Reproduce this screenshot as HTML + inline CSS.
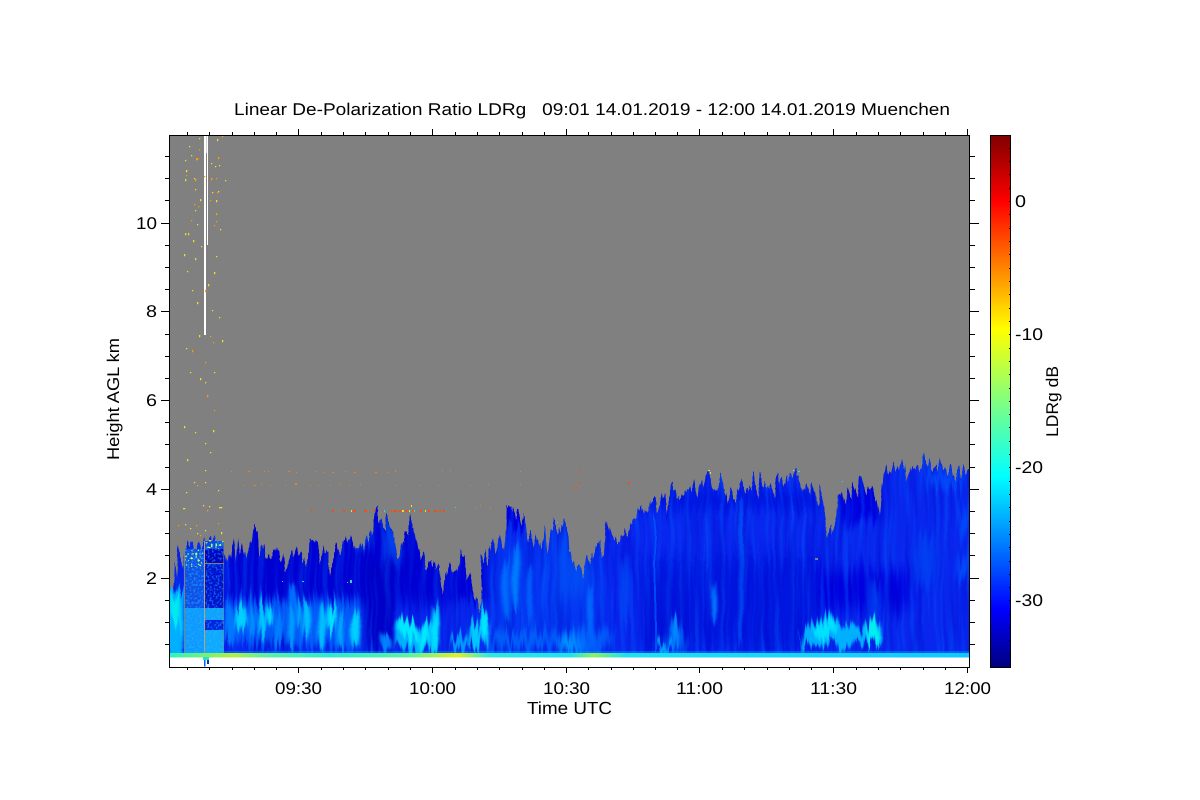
<!DOCTYPE html>
<html><head><meta charset="utf-8"><title>LDRg</title>
<style>html,body{margin:0;padding:0;background:#fff}svg{display:block}text{font-family:"Liberation Sans",sans-serif;fill:#000}</style></head>
<body>
<svg width="1200" height="800" viewBox="0 0 1200 800" xmlns="http://www.w3.org/2000/svg" shape-rendering="crispEdges">
<defs>
<linearGradient id="jet" x1="0" y1="1" x2="0" y2="0">
<stop offset="0" stop-color="#000080"/><stop offset=".11" stop-color="#0000ff"/><stop offset=".36" stop-color="#00ffff"/><stop offset=".5" stop-color="#80ff80"/><stop offset=".635" stop-color="#ffff00"/><stop offset=".875" stop-color="#ff0000"/><stop offset="1" stop-color="#800000"/>
</linearGradient>
<linearGradient id="band" x1="0" y1="0" x2="1" y2="0">
<stop offset="0" stop-color="#30f0c0"/><stop offset=".08" stop-color="#b0f040"/><stop offset=".12" stop-color="#60f0a0"/><stop offset=".2" stop-color="#30e8d0"/><stop offset=".3" stop-color="#60f0a0"/><stop offset=".36" stop-color="#e0f020"/><stop offset=".4" stop-color="#30e8e0"/><stop offset=".5" stop-color="#20e0f0"/><stop offset=".53" stop-color="#90f060"/><stop offset=".57" stop-color="#20e0f0"/><stop offset="1" stop-color="#10c8ff"/>
</linearGradient>
<filter id="b2" x="-30%" y="-30%" width="160%" height="160%"><feGaussianBlur stdDeviation="1.6"/></filter>
<filter id="b4" x="-30%" y="-30%" width="160%" height="160%"><feGaussianBlur stdDeviation="4"/></filter>
<filter id="b8" x="-30%" y="-30%" width="160%" height="160%"><feGaussianBlur stdDeviation="8"/></filter>
<filter id="streak" x="0" y="0" width="100%" height="100%" color-interpolation-filters="sRGB">
<feTurbulence type="fractalNoise" baseFrequency="0.2 0.008" numOctaves="2" seed="4"/>
<feColorMatrix type="matrix" values="0 0 0 0 0  0 0 0 0 .45  0 0 0 0 1  3.5 0 0 0 -1.6"/>
</filter>
<filter id="streakd" x="0" y="0" width="100%" height="100%" color-interpolation-filters="sRGB">
<feTurbulence type="fractalNoise" baseFrequency="0.16 0.012" numOctaves="2" seed="11"/>
<feColorMatrix type="matrix" values="0 0 0 0 0  0 0 0 0 0  0 0 0 0 .78  3.5 0 0 0 -1.6"/>
</filter>
<filter id="grain" x="0" y="0" width="100%" height="100%" color-interpolation-filters="sRGB">
<feTurbulence type="fractalNoise" baseFrequency="0.5 0.45" numOctaves="1" seed="7"/>
<feColorMatrix type="matrix" values="0 0 0 0 .1  0 0 0 0 .75  0 0 0 0 1  6 0 0 0 -2.9"/>
</filter>
<filter id="grainy" x="0" y="0" width="100%" height="100%" color-interpolation-filters="sRGB">
<feTurbulence type="fractalNoise" baseFrequency="0.45 0.45" numOctaves="1" seed="3"/>
<feColorMatrix type="matrix" values="0 0 0 0 .75  0 0 0 0 1  0 0 0 0 .35  9 0 0 0 -5.2"/>
</filter>
<filter id="jag" filterUnits="userSpaceOnUse" x="160" y="430" width="820" height="240" color-interpolation-filters="sRGB">
<feTurbulence type="fractalNoise" baseFrequency="0.3 0.01" numOctaves="2" seed="8" result="n1"/>
<feColorMatrix in="n1" type="matrix" values="0 0 0 0 .5  1 0 0 0 0  0 0 0 0 .5  0 0 0 0 1" result="m1"/>
<feDisplacementMap in="SourceGraphic" in2="m1" scale="38" xChannelSelector="R" yChannelSelector="G" result="d1"/>
<feTurbulence type="fractalNoise" baseFrequency="0.01 0.03" numOctaves="1" seed="5" result="n2"/>
<feColorMatrix in="n2" type="matrix" values="1 0 0 0 0  0 0 0 0 .5  0 0 0 0 .5  0 0 0 0 1" result="m2"/>
<feDisplacementMap in="d1" in2="m2" scale="6" xChannelSelector="R" yChannelSelector="G"/>
</filter>
<clipPath id="cloud"><polygon points="160,668 160,585 172,592 174,556 176,578 178,560 180,548 183,572 185,548 204,547 204,541 224,541 225,546 228,562 230,546 232,558 234,541 236,560 238,538 240,558 243,543 246,556 249,540 251,552 253,530 255,526 257,528 259,550 262,556 264,546 267,552 270,552 273,545 276,548 279,560 282,552 286,566 289,552 292,562 295,546 298,560 302,550 306,562 309,545 311,543 314,552 317,548 320,566 323,550 327,554 331,570 335,552 340,556 344,548 349,546 353,552 358,549 364,547 368,540 372,532 374,520 377,513 380,517 383,516 386,528 389,523 392,532 395,546 398,553 402,535 405,530 408,526 411,520 414,524 416,544 420,560 425,562 430,566 436,572 440,570 444,600 441,607 446,580 450,562 453,566 456,575 460,558 464,556 466,572 470,580 474,590 478,605 481,610 483,590 480,560 484,554 488,558 492,546 495,552 498,538 501,532 504,546 507,507 513,507 516,514 520,512 524,518 526,534 530,528 533,540 537,532 541,546 544,534 547,550 551,528 555,525 559,528 563,528 568,529 569,550 572,558 575,563 578,565 581,570 584,574 586,558 590,560 594,556 598,552 601,546 604,548 606,530 608,515 610,530 611,538 615,534 619,538 623,532 627,538 631,528 634,522 637,520 640,510 643,507 645,516 647,506 650,510 653,502 656,497 659,512 662,500 665,494 668,505 671,492 675,488 678,497 681,500 685,490 690,488 694,487 697,495 700,480 703,485 706,475 709,474 712,486 715,495 718,480 721,478 724,490 727,496 730,492 733,500 736,495 738,490 742,482 745,488 748,486 752,485 755,482 758,490 761,479 764,486 767,486 771,482 775,490 779,476 782,480 786,484 790,476 794,474 798,476 801,482 804,492 807,482 810,490 813,480 816,496 818,505 821,494 824,510 827,536 830,524 832,530 835,515 838,495 841,492 845,505 848,490 851,498 854,484 858,496 860,478 863,476 866,496 869,486 873,484 876,500 879,516 881,500 883,482 885,468 889,470 892,476 895,470 899,478 902,464 905,464 908,484 911,470 914,466 918,468 921,465 925,462 928,463 931,472 935,466 939,470 943,466 947,470 951,468 955,472 960,474 964,475 969,474 980,474 980,668"/></clipPath>
<clipPath id="plot"><rect x="169" y="135" width="801" height="532"/></clipPath>
<clipPath id="blockclip"><polygon points="184,658 184,549 204,549 204,541 224,541 224,658"/></clipPath>
</defs>

<!-- plot background -->
<rect x="169" y="135" width="801" height="532" fill="#808080"/>

<!-- cloud -->
<g clip-path="url(#plot)">
<g filter="url(#jag)">
<g clip-path="url(#cloud)" shape-rendering="auto">
<rect x="160" y="460" width="820" height="208" fill="#0826ee"/>
<rect x="225" y="510" width="225" height="95" fill="#0000d4" filter="url(#b8)"/>
<rect x="450" y="540" width="40" height="60" fill="#0000d8" filter="url(#b4)"/>
<rect x="365" y="560" width="30" height="92" fill="#0000c8" filter="url(#b4)"/>
<rect x="250" y="630" width="50" height="22" fill="#0010d8" filter="url(#b4)"/>
<rect x="505" y="500" width="30" height="25" fill="#0000e0" filter="url(#b2)"/>
<rect x="490" y="535" width="110" height="115" fill="#0048f8" opacity=".5" filter="url(#b8)"/>
<rect x="600" y="490" width="220" height="20" fill="#0418e4" filter="url(#b4)"/>
<rect x="800" y="570" width="110" height="40" fill="#0000e0" filter="url(#b8)"/>
<rect x="840" y="470" width="40" height="50" fill="#0000e0" filter="url(#b4)"/>
<rect x="640" y="560" width="180" height="90" fill="#0416e0" filter="url(#b8)"/>
<rect x="160" y="460" width="820" height="208" filter="url(#streak)" opacity=".3"/>
<rect x="160" y="460" width="820" height="208" filter="url(#streakd)" opacity=".3"/>

<!-- lower-left bright streaks -->
<rect x="225" y="600" width="135" height="45" fill="#0070ff" opacity=".75" filter="url(#b4)"/>
<ellipse cx="230" cy="628" rx="5" ry="22" fill="#0078ff" filter="url(#b2)"/>
<ellipse cx="241" cy="620" rx="6" ry="13" fill="#00d0ff" filter="url(#b2)"/>
<ellipse cx="252" cy="622" rx="3" ry="12" fill="#0090ff" filter="url(#b2)"/>
<ellipse cx="262" cy="620" rx="4" ry="15" fill="#00c8ff" filter="url(#b2)"/>
<ellipse cx="269" cy="616" rx="3" ry="10" fill="#00e0ff" filter="url(#b2)"/>
<ellipse cx="278" cy="628" rx="4" ry="14" fill="#0080ff" filter="url(#b2)"/>
<ellipse cx="291" cy="625" rx="3" ry="21" fill="#00a0ff" filter="url(#b2)"/>
<ellipse cx="298" cy="612" rx="2" ry="12" fill="#00b8ff" filter="url(#b2)"/>
<ellipse cx="306" cy="620" rx="4" ry="18" fill="#00c0ff" filter="url(#b2)"/>
<ellipse cx="322" cy="625" rx="4" ry="20" fill="#00c0ff" filter="url(#b2)"/>
<ellipse cx="331" cy="618" rx="5" ry="13" fill="#00e0ff" filter="url(#b2)"/>
<ellipse cx="341" cy="630" rx="3" ry="18" fill="#00a8ff" filter="url(#b2)"/>
<ellipse cx="356" cy="625" rx="5" ry="15" fill="#00d0ff" filter="url(#b2)"/>
<ellipse cx="293" cy="598" rx="4" ry="12" fill="#0070ff" filter="url(#b2)"/>
<ellipse cx="386" cy="642" rx="6" ry="9" fill="#0080ff" filter="url(#b2)"/>
<rect x="395" y="622" width="42" height="28" fill="#00b0ff" filter="url(#b2)"/>
<ellipse cx="408" cy="630" rx="11" ry="9" fill="#00e8ff" filter="url(#b2)"/>
<ellipse cx="424" cy="636" rx="5" ry="11" fill="#00e8ff" filter="url(#b2)"/>
<ellipse cx="435" cy="628" rx="4" ry="22" fill="#00e0ff" filter="url(#b2)"/>
<ellipse cx="460" cy="644" rx="10" ry="7" fill="#0098ff" filter="url(#b2)"/>
<ellipse cx="475" cy="636" rx="6" ry="15" fill="#00c8ff" filter="url(#b2)"/>
<ellipse cx="484" cy="628" rx="5" ry="18" fill="#00e4ff" filter="url(#b2)"/>

<ellipse cx="506" cy="590" rx="4" ry="35" fill="#0078ff" opacity=".8" filter="url(#b2)"/>
<ellipse cx="516" cy="575" rx="4" ry="35" fill="#0088ff" opacity=".85" filter="url(#b2)"/>
<ellipse cx="530" cy="590" rx="3" ry="30" fill="#0070ff" opacity=".7" filter="url(#b2)"/>
<ellipse cx="360" cy="530" rx="12" ry="22" fill="#0050f0" filter="url(#b4)"/>
<ellipse cx="392" cy="545" rx="8" ry="20" fill="#0040ec" filter="url(#b4)"/>
<ellipse cx="545" cy="640" rx="22" ry="8" fill="#0058f8" filter="url(#b4)"/>
<ellipse cx="515" cy="643" rx="30" ry="7" fill="#0060f8" filter="url(#b4)"/>
<ellipse cx="575" cy="575" rx="12" ry="25" fill="#0050f4" filter="url(#b8)"/>

<rect x="160" y="590" width="24" height="66" fill="#00b0ff" filter="url(#b2)"/>
<rect x="170" y="598" width="10" height="25" fill="#00e8f0" filter="url(#b2)"/>

<!-- right side bright patches -->
<path d="M799 643 L803 632 L812 623 L820 618 L828 613 L834 620 L848 625 L860 630 L868 622 L876 620 L881 622 L882 642 L860 643 L840 646 L812 646 Z" fill="#00b0ff" filter="url(#b2)"/>
<ellipse cx="825" cy="630" rx="12" ry="9" fill="#00e0ff" filter="url(#b2)"/>
<ellipse cx="873" cy="633" rx="7" ry="10" fill="#00f0f0" filter="url(#b2)"/>
<ellipse cx="675" cy="632" rx="4" ry="14" fill="#0090ff" filter="url(#b2)"/>
<ellipse cx="664" cy="647" rx="9" ry="6" fill="#00a0ff" filter="url(#b2)"/>
<ellipse cx="675" cy="640" rx="12" ry="12" fill="#0080ff" opacity=".6" filter="url(#b4)"/>
<ellipse cx="714" cy="604" rx="2.5" ry="20" fill="#0080ff" filter="url(#b2)"/>
<rect x="739.5" y="500" width="2.5" height="150" fill="#0078ff" opacity=".8" filter="url(#b2)"/>
<rect x="654" y="520" width="2" height="130" fill="#0060ff" opacity=".7"/>
<ellipse cx="572" cy="645" rx="13" ry="8" fill="#00a0ff" filter="url(#b4)"/>
<ellipse cx="590" cy="640" rx="22" ry="12" fill="#0070ff" opacity=".7" filter="url(#b4)"/>
<ellipse cx="590" cy="610" rx="2.5" ry="25" fill="#0070ff" filter="url(#b2)"/>
<ellipse cx="625" cy="590" rx="5" ry="30" fill="#0058f8" opacity=".7" filter="url(#b4)"/>
<ellipse cx="875" cy="600" rx="5" ry="22" fill="#0044f0" filter="url(#b4)"/>
<ellipse cx="925" cy="560" rx="10" ry="28" fill="#0048f4" opacity=".7" filter="url(#b4)"/>
<ellipse cx="963" cy="565" rx="6" ry="13" fill="#0060ff" opacity=".7" filter="url(#b4)"/>
<ellipse cx="964" cy="520" rx="5" ry="14" fill="#0060ff" opacity=".7" filter="url(#b4)"/>
<ellipse cx="945" cy="480" rx="20" ry="9" fill="#0060ff" opacity=".55" filter="url(#b4)"/>
</g>
</g>

<!-- left noisy block -->
<g clip-path="url(#blockclip)">
<rect x="184" y="548" width="20" height="60" fill="#1050e8"/>
<rect x="184" y="608" width="20" height="46" fill="#1098ff"/>
<rect x="205" y="541" width="19" height="37" fill="#0000c0"/>
<rect x="205" y="541" width="19" height="8" fill="#0848e8"/>
<rect x="205" y="563" width="19" height="45" fill="#0010d0"/>
<rect x="205" y="608" width="19" height="12" fill="#10a0ff"/>
<rect x="205" y="620" width="19" height="10" fill="#0020e0"/>
<rect x="205" y="630" width="19" height="24" fill="#10a8ff"/>
<rect x="184" y="541" width="40" height="113" filter="url(#grain)" opacity=".45"/>
<rect x="184" y="541" width="20" height="26" filter="url(#grainy)"/>
<rect x="205" y="541" width="19" height="8" filter="url(#grainy)"/>
<rect x="184" y="548" width="1.2" height="107" fill="#808080"/>
<rect x="204" y="541" width="1.2" height="116" fill="#c0a070"/>
<rect x="223.5" y="540" width="1.5" height="117" fill="#808080"/>
<rect x="205" y="563" width="19" height="1" fill="#808080"/>
</g>

<rect x="169" y="651" width="801" height="2" fill="#00b8ff" opacity=".35"/>
<rect x="169" y="653" width="801" height="4.5" fill="url(#band)"/>
<rect x="170" y="657.5" width="799" height="9.5" fill="#fff"/>
</g>

<!-- vertical white line near 09:10 -->
<rect x="204" y="135" width="2" height="200" fill="#fff"/>
<rect x="207" y="135" width="1" height="110" fill="#fff"/>
<rect x="206" y="135" width="1" height="18" fill="#d0d0d0"/>

<!-- bottom spike -->
<rect x="203" y="657" width="6" height="3" fill="#30e0c0"/>
<rect x="204" y="660" width="1.5" height="6.5" fill="#0060ff"/>
<rect x="207" y="660" width="2" height="4" fill="#0030e0"/>

<!-- specks -->
<path fill="#f0e020" stroke="#f0e020" stroke-width=".3" d="M199 138h1v1h-1z M217 139h1v2h-1z M189 146h1v1h-1z M191 155h1v1h-1z M185 160h1v1h-1z M185 179h1v2h-1z M186 170h1v2h-1z M194 178h1v1h-1z M211 163h1v1h-1z M215 166h1v1h-1z M219 165h1v1h-1z M225 180h1v1h-1z M195 189h1v1h-1z M218 191h1v1h-1z M212 192h1v1h-1z M200 199h1v2h-1z M216 200h1v2h-1z M195 210h1v1h-1z M185 233h1v2h-1z M188 233h1v2h-1z M197 224h1v1h-1z M193 240h1v2h-1z M220 229h1v1h-1z M195 258h1v2h-1z M201 246h1v1h-1z M216 256h1v1h-1z M187 271h1v1h-1z M214 272h1v2h-1z M184 254h1v2h-1z M208 284h1v2h-1z M192 290h1v1h-1z M197 302h1v2h-1z M212 310h1v1h-1z M219 317h1v1h-1z M222 340h1v2h-1z M199 335h1v2h-1z M186 348h1v1h-1z M205 382h1v1h-1z M214 372h1v1h-1z M190 372h1v1h-1z M200 378h1v2h-1z M184 426h1v2h-1z M195 432h1v1h-1z M213 430h1v2h-1z M205 443h1v1h-1z M210 452h1v1h-1z M187 459h1v2h-1z M205 470h1v1h-1z M194 482h1v1h-1z M205 482h1v1h-1z M218 490h1v1h-1z M186 492h1v1h-1z M203 505h1v1h-1z M219 507h3v1h-3z M183 508h2v1h-2z M209 506h1v1h-1z M190 528h1v1h-1z M185 524h1v1h-1z M221 532h1v2h-1z M205 530h1v1h-1z M209 540h2v1h-2z M197 533h1v1h-1z"/>
<path fill="#ff9a00" stroke="#ff9a00" stroke-width=".3" d="M222 136h1v1h-1z M199 149h1v1h-1z M196 158h2v2h-2z M218 157h1v2h-1z M211 178h1v2h-1z M204 176h1v1h-1z M186 175h1v1h-1z M216 178h1v1h-1z M195 179h1v2h-1z M217 192h1v1h-1z M210 200h1v1h-1z M194 204h1v1h-1z M198 206h1v1h-1z M191 220h1v1h-1z M216 213h1v2h-1z M216 221h1v1h-1z M214 225h1v1h-1z M205 290h1v2h-1z M210 336h1v1h-1z M207 395h1v2h-1z M214 410h1v1h-1z M205 362h1v1h-1z M192 350h1v2h-1z M213 342h1v1h-1z M197 485h1v1h-1z M207 510h1v1h-1z M178 525h1v1h-1z M196 525h1v1h-1z M218 523h1v1h-1z M200 535h1v1h-1z"/>
<!-- horizontal dotted layers -->
<path fill="#f08018" d="M231 471h1v1h-1z M248 471h2v1h-2z M264 471h1v1h-1z M268 471h1v1h-1z M288 471h2v1h-2z M296 472h1v1h-1z M315 471h1v1h-1z M323 472h1v1h-1z M332 472h2v1h-2z M345 471h1v1h-1z M354 472h2v1h-2z M375 472h2v1h-2z M388 472h1v1h-1z M395 470h1v2h-1z M442 470h1v1h-1z M450 470h1v1h-1z M520 471h1v1h-1z M244 485h1v1h-1z M254 485h2v1h-2z M261 484h1v1h-1z M270 485h1v1h-1z M285 485h1v1h-1z M295 483h2v2h-2z M310 485h1v1h-1z M318 485h1v1h-1z M330 485h1v1h-1z M340 484h1v1h-1z M349 485h1v1h-1z M360 484h1v1h-1z M395 485h1v1h-1z M420 485h1v1h-1z M438 485h1v1h-1z M470 485h1v1h-1z M488 484h1v1h-1z M520 484h1v1h-1z M510 505h1v1h-1z M480 505h1v1h-1z M490 508h1v1h-1z M475 508h1v1h-1z"/>
<path fill="#f05010" d="M311 510h1v2h-1z M332 510h2v2h-2z M343 510h2v2h-2z M353 510h3v2h-3z M364 510h3v2h-3z M373 510h2v2h-2z M391 510h1v2h-1z M393 510h4v2h-4z M399 510h2v2h-2z M405 510h2v2h-2z M412 510h2v2h-2z M420 510h2v2h-2z M428 510h2v2h-2z M434 510h3v2h-3z M439 510h2v2h-2z M443 510h2v2h-2z M575 487h2v2h-2z M579 482h1v2h-1z M628 482h2v2h-2z M579 469h1v2h-1z"/>
<path fill="#f0e020" d="M351 510h1v2h-1z M402 510h2v2h-2z M409 510h1v2h-1z M425 510h1v2h-1z M411 505h1v2h-1z M793 470h1v1h-1z M710 472h1v2h-1z M708 470h2v1h-2z"/>
<path fill="#20e0e0" d="M384 510h1v2h-1z M414 510h1v2h-1z M455 507h1v1h-1z M798 471h2v1h-2z M842 481h1v1h-1z M557 522h1v1h-1z M347 582h1v1h-1z M282 581h1v1h-1z M302 581h2v1h-2z M350 580h2v3h-2z"/>
<path fill="#808080" d="M815 558h3v2h-3z"/>

<!-- plot frame and ticks -->
<rect x="169.5" y="135.5" width="800" height="532" fill="none" stroke="#000" stroke-width="1.4"/>
<path stroke="#000" stroke-width="1.2" fill="none" d="
M187.5 667v3 M209.5 667v3 M232.5 667v3 M254.5 667v3 M276.5 667v3 M321.5 667v3 M343.5 667v3 M365.5 667v3 M388.5 667v3 M410.5 667v3 M455.5 667v3 M477.5 667v3 M499.5 667v3 M522.5 667v3 M544.5 667v3 M588.5 667v3 M611.5 667v3 M633.5 667v3 M655.5 667v3 M677.5 667v3 M722.5 667v3 M744.5 667v3 M767.5 667v3 M789.5 667v3 M811.5 667v3 M856.5 667v3 M878.5 667v3 M900.5 667v3 M923.5 667v3 M945.5 667v3
M298.5 667v6 M432.5 667v6 M566.5 667v6 M699.5 667v6 M833.5 667v6 M967.5 667v6
M187.5 135v-3 M209.5 135v-3 M232.5 135v-3 M254.5 135v-3 M276.5 135v-3 M321.5 135v-3 M343.5 135v-3 M365.5 135v-3 M388.5 135v-3 M410.5 135v-3 M455.5 135v-3 M477.5 135v-3 M499.5 135v-3 M522.5 135v-3 M544.5 135v-3 M588.5 135v-3 M611.5 135v-3 M633.5 135v-3 M655.5 135v-3 M677.5 135v-3 M722.5 135v-3 M744.5 135v-3 M767.5 135v-3 M789.5 135v-3 M811.5 135v-3 M856.5 135v-3 M878.5 135v-3 M900.5 135v-3 M923.5 135v-3 M945.5 135v-3
M298.5 135v-6 M432.5 135v-6 M566.5 135v-6 M699.5 135v-6 M833.5 135v-6 M967.5 135v-6
M165 156.5h4 M165 178.5h4 M165 200.5h4 M165 245.5h4 M165 267.5h4 M165 289.5h4 M165 334.5h4 M165 356.5h4 M165 378.5h4 M165 422.5h4 M165 444.5h4 M165 467.5h4 M165 511.5h4 M165 533.5h4 M165 555.5h4 M165 600.5h4 M165 622.5h4 M165 644.5h4
M161 223.5h8 M161 311.5h8 M161 400.5h8 M161 489.5h8 M161 578.5h8
M970 156.5h5 M970 178.5h5 M970 200.5h5 M970 245.5h5 M970 267.5h5 M970 289.5h5 M970 334.5h5 M970 356.5h5 M970 378.5h5 M970 422.5h5 M970 444.5h5 M970 467.5h5 M970 511.5h5 M970 533.5h5 M970 555.5h5 M970 600.5h5 M970 622.5h5 M970 644.5h5
M970 223.5h9 M970 311.5h9 M970 400.5h9 M970 489.5h9 M970 578.5h9"/>

<!-- colour bar -->
<rect x="990.5" y="135.5" width="20" height="532" fill="url(#jet)" stroke="#000" stroke-width="1.2"/>
<path stroke="#000" stroke-width="1" d="M1009 148.5h1.5 M1009 161.5h1.5 M1009 174.5h1.5 M1009 188.5h1.5 M1009 201.5h1.5 M1009 214.5h1.5 M1009 228.5h1.5 M1009 241.5h1.5 M1009 254.5h1.5 M1009 268.5h1.5 M1009 281.5h1.5 M1009 294.5h1.5 M1009 308.5h1.5 M1009 321.5h1.5 M1009 334.5h1.5 M1009 348.5h1.5 M1009 361.5h1.5 M1009 374.5h1.5 M1009 388.5h1.5 M1009 401.5h1.5 M1009 414.5h1.5 M1009 427.5h1.5 M1009 441.5h1.5 M1009 454.5h1.5 M1009 467.5h1.5 M1009 481.5h1.5 M1009 494.5h1.5 M1009 507.5h1.5 M1009 521.5h1.5 M1009 534.5h1.5 M1009 547.5h1.5 M1009 561.5h1.5 M1009 574.5h1.5 M1009 587.5h1.5 M1009 600.5h1.5 M1009 614.5h1.5 M1009 627.5h1.5 M1009 640.5h1.5 M1009 654.5h1.5"/>

<!-- text -->
<g text-rendering="geometricPrecision" shape-rendering="auto">
<text x="234" y="115" font-size="17" textLength="716" lengthAdjust="spacingAndGlyphs" xml:space="preserve">Linear De-Polarization Ratio LDRg   09:01 14.01.2019 - 12:00 14.01.2019 Muenchen</text>
<g font-size="17">
<text x="136" y="229" textLength="21" lengthAdjust="spacingAndGlyphs">10</text>
<text x="146" y="317" textLength="11" lengthAdjust="spacingAndGlyphs">8</text>
<text x="146" y="406" textLength="11" lengthAdjust="spacingAndGlyphs">6</text>
<text x="146" y="495" textLength="11" lengthAdjust="spacingAndGlyphs">4</text>
<text x="146" y="584" textLength="11" lengthAdjust="spacingAndGlyphs">2</text>
<text x="275" y="694" textLength="47" lengthAdjust="spacingAndGlyphs">09:30</text>
<text x="409" y="694" textLength="47" lengthAdjust="spacingAndGlyphs">10:00</text>
<text x="543" y="694" textLength="47" lengthAdjust="spacingAndGlyphs">10:30</text>
<text x="676" y="694" textLength="47" lengthAdjust="spacingAndGlyphs">11:00</text>
<text x="810" y="694" textLength="47" lengthAdjust="spacingAndGlyphs">11:30</text>
<text x="944" y="694" textLength="47" lengthAdjust="spacingAndGlyphs">12:00</text>
</g>
<text x="527" y="714" font-size="17.5" textLength="85" lengthAdjust="spacingAndGlyphs">Time UTC</text>
<text transform="translate(119 460) rotate(-90)" font-size="17" textLength="122" lengthAdjust="spacingAndGlyphs">Height AGL km</text>
<g font-size="17">
<text x="1015" y="207" textLength="11" lengthAdjust="spacingAndGlyphs">0</text>
<text x="1015" y="340" textLength="28" lengthAdjust="spacingAndGlyphs">-10</text>
<text x="1015" y="473" textLength="28" lengthAdjust="spacingAndGlyphs">-20</text>
<text x="1015" y="606" textLength="28" lengthAdjust="spacingAndGlyphs">-30</text>
</g>
<text transform="translate(1058 437) rotate(-90)" font-size="17" textLength="71" lengthAdjust="spacingAndGlyphs">LDRg dB</text>
</g>
</svg>
</body></html>
